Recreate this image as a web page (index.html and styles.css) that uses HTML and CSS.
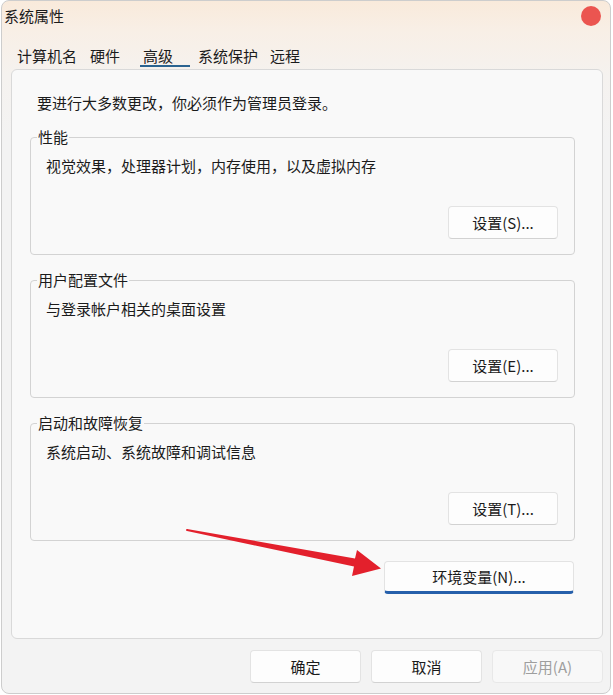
FILE: index.html
```html
<!DOCTYPE html>
<html lang="zh-CN">
<head>
    <meta charset="UTF-8">
    <meta name="viewport" content="width=device-width, initial-scale=1.0">
    <title>系统属性</title>
    <link rel="stylesheet" href="styles.css">
</head>
<body>

<div class="window">
    <div class="titlebar">
        <span class="title">系统属性</span>
        <span class="close"></span>
    </div>

    <div class="tabs">
        <span class="tab t1">计算机名</span>
        <span class="tab t2">硬件</span>
        <span class="tab active">高级</span>
        <span class="tab t4">系统保护</span>
        <span class="tab t5">远程</span>
    </div>

    <div class="panel">
        <p class="intro">要进行大多数更改，你必须作为管理员登录。</p>

        <fieldset class="group">
            <legend>性能</legend>
            <p class="desc">视觉效果，处理器计划，内存使用，以及虚拟内存</p>
            <button class="btn set">设置(S)...</button>
        </fieldset>

        <fieldset class="group">
            <legend>用户配置文件</legend>
            <p class="desc">与登录帐户相关的桌面设置</p>
            <button class="btn set">设置(E)...</button>
        </fieldset>

        <fieldset class="group">
            <legend>启动和故障恢复</legend>
            <p class="desc">系统启动、系统故障和调试信息</p>
            <button class="btn set">设置(T)...</button>
        </fieldset>

        <button class="btn env">环境变量(N)...</button>
    </div>

    <div class="footer">
        <button class="btn">确定</button>
        <button class="btn">取消</button>
        <button class="btn disabled">应用(A)</button>
    </div>
</div>

<!-- 红色箭头 -->
<svg class="arrow" width="613" height="695" viewBox="0 0 613 695">
    <polygon fill="#e3202c" points="187,529 355,558.5 357,550 381,568.5 352,576 354,566.5 187,531"/>
    <circle fill="#e3202c" cx="187" cy="530" r="1"/>
</svg>

</body>
</html>
```

FILE: styles.css
```css
body {
    margin: 0;
    background: #ffffff;
    font-family: "Noto Sans CJK SC", "Noto Sans", sans-serif;
    font-size: 15px;
    color: #1b1b1b;
}
.window {
    margin-left: 1px;
    width: 610px;
    height: 694px;
    box-sizing: border-box;
    border: 1px solid #cdcdcd;
    border-radius: 8px;
    background: linear-gradient(#f9eadb 0, #f8efe6 30px, #f5f2ef 75px, #f3f3f3 140px);
    display: flex;
    flex-direction: column;
}
.titlebar {
    height: 30px;
    display: flex;
    align-items: center;
    justify-content: space-between;
    padding-left: 2px;
    padding-right: 9px;
}
.title {
    line-height: 20px;
}
.close {
    width: 20px;
    height: 20px;
    border-radius: 50%;
    background: #eb5550;
}
.tabs {
    margin-top: 16px;
    padding-left: 15px;
    display: flex;
    height: 20px;
}
.tab {
    line-height: 18px;
    border-bottom: 2px solid transparent;
}
.t2 { margin-left: 13px; }
.active {
    margin-left: 20px;
    padding: 0 17px 0 3px;
    border-bottom-color: #2a6390;
}
.t4 { margin-left: 8px; }
.t5 { margin-left: 12px; }
.panel {
    margin: 2px 0 0 9px;
    width: 592px;
    height: 570px;
    box-sizing: border-box;
    border: 1px solid #d9d9d9;
    border-radius: 6px;
    background: #f9f9f9;
    padding: 23px 27px 0 18px;
    display: flex;
    flex-direction: column;
}
.intro {
    margin: 0 0 14px 7px;
    line-height: 20px;
}
.group {
    margin: 0 0 15px 0;
    padding: 0 16px 15px 0;
    border: 1px solid #d3d3d3;
    border-radius: 4px;
    display: flex;
    flex-direction: column;
}
.group legend {
    margin-left: 6px;
    padding: 0 1px;
    line-height: 20px;
}
.desc {
    margin: 9px 0 0 15px;
    line-height: 20px;
}
.btn {
    font-family: inherit;
    font-size: 15px;
    color: #1b1b1b;
    height: 33px;
    background: #fdfdfd;
    border: 1px solid #e3e3e3;
    border-bottom-color: #d2d2d2;
    border-radius: 4px;
    padding: 0;
}
.set {
    align-self: flex-end;
    width: 110px;
    margin-top: 30px;
}
.env {
    align-self: flex-end;
    width: 190px;
    margin: 5px 1px 0 0;
    border-bottom: 3px solid #2660ab;
}
.footer {
    margin-top: 11px;
    display: flex;
    justify-content: flex-end;
    gap: 10px;
    padding-right: 7px;
}
.footer .btn {
    width: 111px;
}
.disabled {
    color: #9e9e9e;
    background: #f8f8f8;
    border-color: #e8e8e8;
}
.arrow {
    position: absolute;
    top: 0;
    left: 0;
    pointer-events: none;
}
```
